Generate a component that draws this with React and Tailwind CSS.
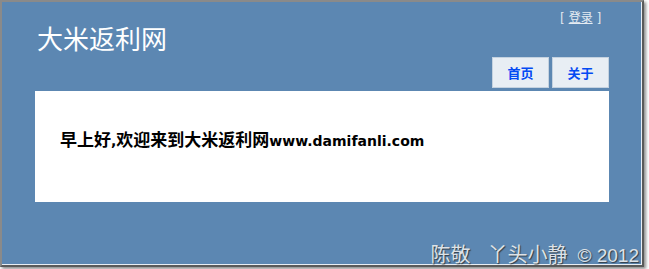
export default function App() {
  return (
    <div className="w-[649px] h-[269px] bg-white relative overflow-hidden">
      <div className="w-[644px] h-[267px] border-t-2 border-l-2 border-r-2 border-b-2 border-t-[#8a8a8a] border-l-[#8a8a8a] border-r-[#5a5a5a] border-b-[#5a5a5a] shadow-[2px_2px_3px_rgba(0,0,0,0.45)]">
        <div
          className="relative w-full h-full bg-[#5c87b2] border-r border-b border-r-[#e8eef4] border-b-[#e8eef4] flex flex-col"
          style={{ fontFamily: '"Liberation Sans", "Noto Sans CJK SC", sans-serif' }}
        >
          <div className="pt-[8px] pr-[40px] flex justify-end text-[12px] leading-[14px] text-[#e6ecf2]">
            <span>[</span>
            <a className="mx-[5px] underline cursor-pointer" style={{ fontFamily: '"Noto Sans CJK SC", sans-serif' }}>登录</a>
            <span>]</span>
          </div>
          <div className="pl-[35px] text-[26px] leading-[28px] text-white" style={{ fontFamily: '"Noto Sans CJK SC", sans-serif' }}>
            大米返利网
          </div>
          <div className="mt-[5px] pr-[32px] flex justify-end gap-[3px]">
            <div className="w-[57px] h-[31px] bg-[#e8eef4] border border-[#c4d2e0] flex items-center justify-center text-[13px] font-bold text-[#034af3]" style={{ fontFamily: '"Noto Sans CJK SC", sans-serif' }}>
              首页
            </div>
            <div className="w-[57px] h-[31px] bg-[#e8eef4] border border-[#c4d2e0] flex items-center justify-center text-[13px] font-bold text-[#034af3]" style={{ fontFamily: '"Noto Sans CJK SC", sans-serif' }}>
              关于
            </div>
          </div>
          <div className="mt-[3px] ml-[33px] mr-[32px] h-[111px] bg-white flex items-center pl-[25px] pb-[13px]">
            <div className="text-black font-bold leading-[20px] whitespace-nowrap">
              <span className="text-[17px]" style={{ fontFamily: '"Noto Sans CJK SC", sans-serif' }}>早上好</span>
              <span className="text-[14px]" style={{ fontFamily: '"DejaVu Sans", sans-serif' }}>,</span>
              <span className="text-[17px]" style={{ fontFamily: '"Noto Sans CJK SC", sans-serif' }}>欢迎来到大米返利网</span>
              <span className="text-[14px]" style={{ fontFamily: '"DejaVu Sans", sans-serif' }}>www.damifanli.com</span>
            </div>
          </div>
          <div className="absolute right-[2px] bottom-[-1px] text-[19px] leading-[19px] text-[#dde2e7] whitespace-nowrap [text-shadow:1px_1px_1px_rgba(40,40,40,0.8)]">
            <span className="text-[20px]">陈敬</span>
            <span className="ml-[17px] text-[20px]">丫头小静</span>
            <span className="ml-[10px]">© 2012</span>
          </div>
        </div>
      </div>
    </div>
  );
}
